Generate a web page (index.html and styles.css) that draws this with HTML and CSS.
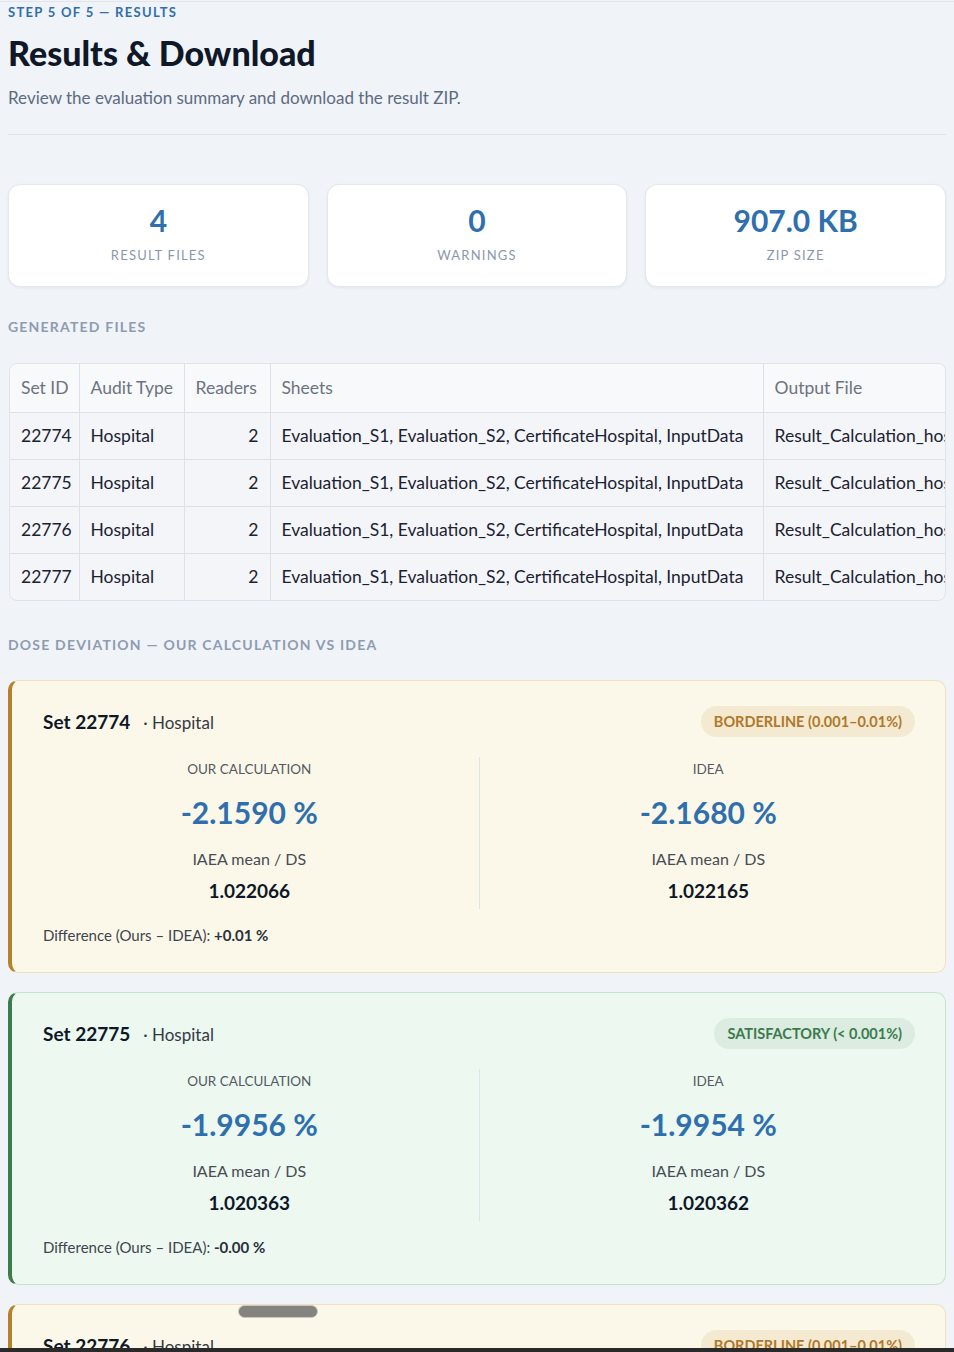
FILE: index.html
```html
<!DOCTYPE html>
<html>
<head>
    <title>Results &amp; Download</title>
    <meta charset="utf-8">
    <link rel="stylesheet" href="styles.css">
</head>
<body>
    <div class="page">
        <div class="eyebrow">STEP 5 OF 5 — RESULTS</div>
        <h1 class="title">Results &amp; Download</h1>
        <p class="subtitle">Review the evaluation summary and download the result ZIP.</p>
        <hr class="divider">

        <div class="metrics">
            <div class="metric">
                <div class="metric-value">4</div>
                <div class="metric-label">RESULT FILES</div>
            </div>
            <div class="metric">
                <div class="metric-value">0</div>
                <div class="metric-label">WARNINGS</div>
            </div>
            <div class="metric">
                <div class="metric-value">907.0 KB</div>
                <div class="metric-label">ZIP SIZE</div>
            </div>
        </div>

        <div class="section-title">GENERATED FILES</div>
        <div class="table-wrap">
            <table class="files">
                <thead>
                    <tr>
                        <th class="col-id">Set ID</th>
                        <th class="col-type">Audit Type</th>
                        <th class="col-readers">Readers</th>
                        <th class="col-sheets">Sheets</th>
                        <th class="col-out">Output File</th>
                    </tr>
                </thead>
                <tbody>
                    <tr>
                        <td>22774</td>
                        <td>Hospital</td>
                        <td class="num">2</td>
                        <td>Evaluation_S1, Evaluation_S2, CertificateHospital, InputData</td>
                        <td>Result_Calculation_hospital_22774.xlsx</td>
                    </tr>
                    <tr>
                        <td>22775</td>
                        <td>Hospital</td>
                        <td class="num">2</td>
                        <td>Evaluation_S1, Evaluation_S2, CertificateHospital, InputData</td>
                        <td>Result_Calculation_hospital_22775.xlsx</td>
                    </tr>
                    <tr>
                        <td>22776</td>
                        <td>Hospital</td>
                        <td class="num">2</td>
                        <td>Evaluation_S1, Evaluation_S2, CertificateHospital, InputData</td>
                        <td>Result_Calculation_hospital_22776.xlsx</td>
                    </tr>
                    <tr>
                        <td>22777</td>
                        <td>Hospital</td>
                        <td class="num">2</td>
                        <td>Evaluation_S1, Evaluation_S2, CertificateHospital, InputData</td>
                        <td>Result_Calculation_hospital_22777.xlsx</td>
                    </tr>
                </tbody>
            </table>
        </div>

        <div class="section-title dose-title">DOSE DEVIATION — OUR CALCULATION VS IDEA</div>

        <div class="set-card borderline">
            <div class="set-head">
                <div><span class="set-name">Set 22774</span><span class="set-type">· Hospital</span></div>
                <span class="badge">BORDERLINE (0.001–0.01%)</span>
            </div>
            <div class="compare">
                <div class="side">
                    <div class="side-label">OUR CALCULATION</div>
                    <div class="side-value">-2.1590 %</div>
                    <div class="side-sub">IAEA mean / DS</div>
                    <div class="side-ratio">1.022066</div>
                </div>
                <div class="side">
                    <div class="side-label">IDEA</div>
                    <div class="side-value">-2.1680 %</div>
                    <div class="side-sub">IAEA mean / DS</div>
                    <div class="side-ratio">1.022165</div>
                </div>
            </div>
            <div class="diff">Difference (Ours – IDEA): <b>+0.01 %</b></div>
        </div>

        <div class="set-card satisfactory">
            <div class="set-head">
                <div><span class="set-name">Set 22775</span><span class="set-type">· Hospital</span></div>
                <span class="badge">SATISFACTORY (&lt; 0.001%)</span>
            </div>
            <div class="compare">
                <div class="side">
                    <div class="side-label">OUR CALCULATION</div>
                    <div class="side-value">-1.9956 %</div>
                    <div class="side-sub">IAEA mean / DS</div>
                    <div class="side-ratio">1.020363</div>
                </div>
                <div class="side">
                    <div class="side-label">IDEA</div>
                    <div class="side-value">-1.9954 %</div>
                    <div class="side-sub">IAEA mean / DS</div>
                    <div class="side-ratio">1.020362</div>
                </div>
            </div>
            <div class="diff">Difference (Ours – IDEA): <b>-0.00 %</b></div>
        </div>

        <div class="set-card borderline">
            <div class="set-head">
                <div><span class="set-name">Set 22776</span><span class="set-type">· Hospital</span></div>
                <span class="badge">BORDERLINE (0.001–0.01%)</span>
            </div>
            <div class="compare">
                <div class="side">
                    <div class="side-label">OUR CALCULATION</div>
                    <div class="side-value">-2.0412 %</div>
                    <div class="side-sub">IAEA mean / DS</div>
                    <div class="side-ratio">1.020837</div>
                </div>
                <div class="side">
                    <div class="side-label">IDEA</div>
                    <div class="side-value">-2.0501 %</div>
                    <div class="side-sub">IAEA mean / DS</div>
                    <div class="side-ratio">1.020930</div>
                </div>
            </div>
        </div>
    </div>

    <div class="scroll-thumb"></div>
    <div class="bottom-bar"></div>
</body>
</html>
```

FILE: styles.css
```css
html, body {
    margin: 0;
    height: 100%;
    overflow: hidden;
}
body {
    font-family: "Source Sans Pro", Lato, "Noto Sans", sans-serif;
    background-color: #f0f3f8;
    color: #111827;
}
.page {
    padding: 0 8px;
    border-top: 1px solid #e1e5eb;
    margin-top: 1px;
}
.eyebrow {
    margin-top: 2px;
    font-size: 13px;
    line-height: 16px;
    font-weight: bold;
    letter-spacing: 1.3px;
    color: #2f6fad;
}
.title {
    margin: 13px 0 0;
    font-size: 34px;
    line-height: 40px;
    font-weight: 900;
    color: #0e1828;
}
.subtitle {
    margin: 14px 0 0;
    font-size: 17px;
    line-height: 22px;
    color: #5d6b80;
}
.divider {
    margin: 25px 0 0;
    border: none;
    border-top: 1px solid #dfe3ea;
}
.metrics {
    margin-top: 49px;
    display: grid;
    grid-template-columns: 1fr 1fr 1fr;
    gap: 18px;
}
.metric {
    background: #fff;
    border: 1px solid #e3e7ee;
    border-radius: 12px;
    box-shadow: 0 1px 3px rgba(20, 30, 50, 0.06);
    text-align: center;
    padding: 17px 0 22px;
}
.metric-value {
    font-size: 30px;
    line-height: 36px;
    font-weight: bold;
    color: #2f6fad;
}
.metric-label {
    margin-top: 8px;
    font-size: 13px;
    line-height: 18px;
    letter-spacing: 1.2px;
    color: #8b98ab;
}
.section-title {
    margin-top: 31px;
    font-size: 14px;
    line-height: 18px;
    font-weight: bold;
    letter-spacing: 1.2px;
    color: #8e9bb0;
}
.table-wrap {
    margin: 27px 0 0 1px;
    border: 1px solid #e0e4ea;
    border-radius: 8px;
    overflow: hidden;
    background: #f3f5f9;
}
.files {
    border-collapse: collapse;
    white-space: nowrap;
    font-size: 17.5px;
    table-layout: fixed;
    width: 1220px;
}
.files th, .files td {
    box-sizing: border-box;
    height: 47px;
    padding: 0 11px;
    text-align: left;
    border-right: 1px solid #dde1e7;
    border-bottom: 1px solid #dde1e7;
    overflow: hidden;
}
.files th {
    height: 48px;
    background: #f8f9fb;
    font-weight: normal;
    color: #6c7380;
}
.files td {
    color: #1b2230;
}
.files tbody tr:last-child td {
    border-bottom: none;
}
.files .num {
    text-align: right;
}
.col-id { width: 69px; }
.col-type { width: 105px; }
.col-readers { width: 86px; }
.col-sheets { width: 493px; }
.col-out { width: 467px; }
.dose-title {
    margin-top: 35px;
}
.set-card {
    margin-top: 26px;
    border: 1px solid;
    border-left: 4px solid;
    border-radius: 10px;
    padding: 25px 8px 27px 8px;
}
.set-card + .set-card {
    margin-top: 19px;
}
.borderline {
    background: #fcf8e9;
    border-color: #f0e2bf;
    border-left-color: #b5812b;
}
.satisfactory {
    background: #ecf8f0;
    border-color: #c6e3cf;
    border-left-color: #3c7d50;
}
.set-head {
    display: flex;
    justify-content: space-between;
    align-items: center;
    padding: 0 22px 0 23px;
    height: 31px;
}
.set-name {
    font-size: 19px;
    font-weight: bold;
    color: #0e1828;
}
.set-type {
    margin-left: 13px;
    font-size: 17px;
    color: #333a44;
}
.badge {
    font-size: 14.5px;
    font-weight: bold;
    line-height: 31px;
    padding: 0 13px;
    border-radius: 16px;
}
.borderline .badge {
    background: #f4ead2;
    color: #b0782a;
}
.satisfactory .badge {
    background: #dcece1;
    color: #3a7b4e;
}
.compare {
    margin-top: 20px;
    display: grid;
    grid-template-columns: 1fr 1fr;
}
.side {
    text-align: center;
    padding: 3px 0 6px;
}
.side + .side {
    border-left: 1px solid #dfe3ea;
}
.side-label {
    font-size: 13.5px;
    line-height: 18px;
    color: #555b63;
}
.side-value {
    margin-top: 16px;
    font-size: 30px;
    line-height: 36px;
    font-weight: bold;
    color: #2f6fad;
}
.side-sub {
    margin-top: 18px;
    font-size: 16px;
    line-height: 22px;
    color: #474d55;
}
.side-ratio {
    margin-top: 9px;
    font-size: 19px;
    line-height: 24px;
    font-weight: bold;
    color: #0e1828;
}
.diff {
    margin-top: 16px;
    padding-left: 23px;
    font-size: 15px;
    line-height: 20px;
    color: #3f454e;
}
.diff b {
    color: #2a3039;
}
.scroll-thumb {
    position: fixed;
    left: 238px;
    top: 1305px;
    width: 80px;
    height: 13px;
    border-radius: 7px;
    background: #858380;
    border: 1px solid #c9c8c5;
    box-sizing: border-box;
}
.bottom-bar {
    position: fixed;
    left: 0;
    right: 0;
    bottom: 0;
    height: 4px;
    background: #2a2a2a;
}
```
